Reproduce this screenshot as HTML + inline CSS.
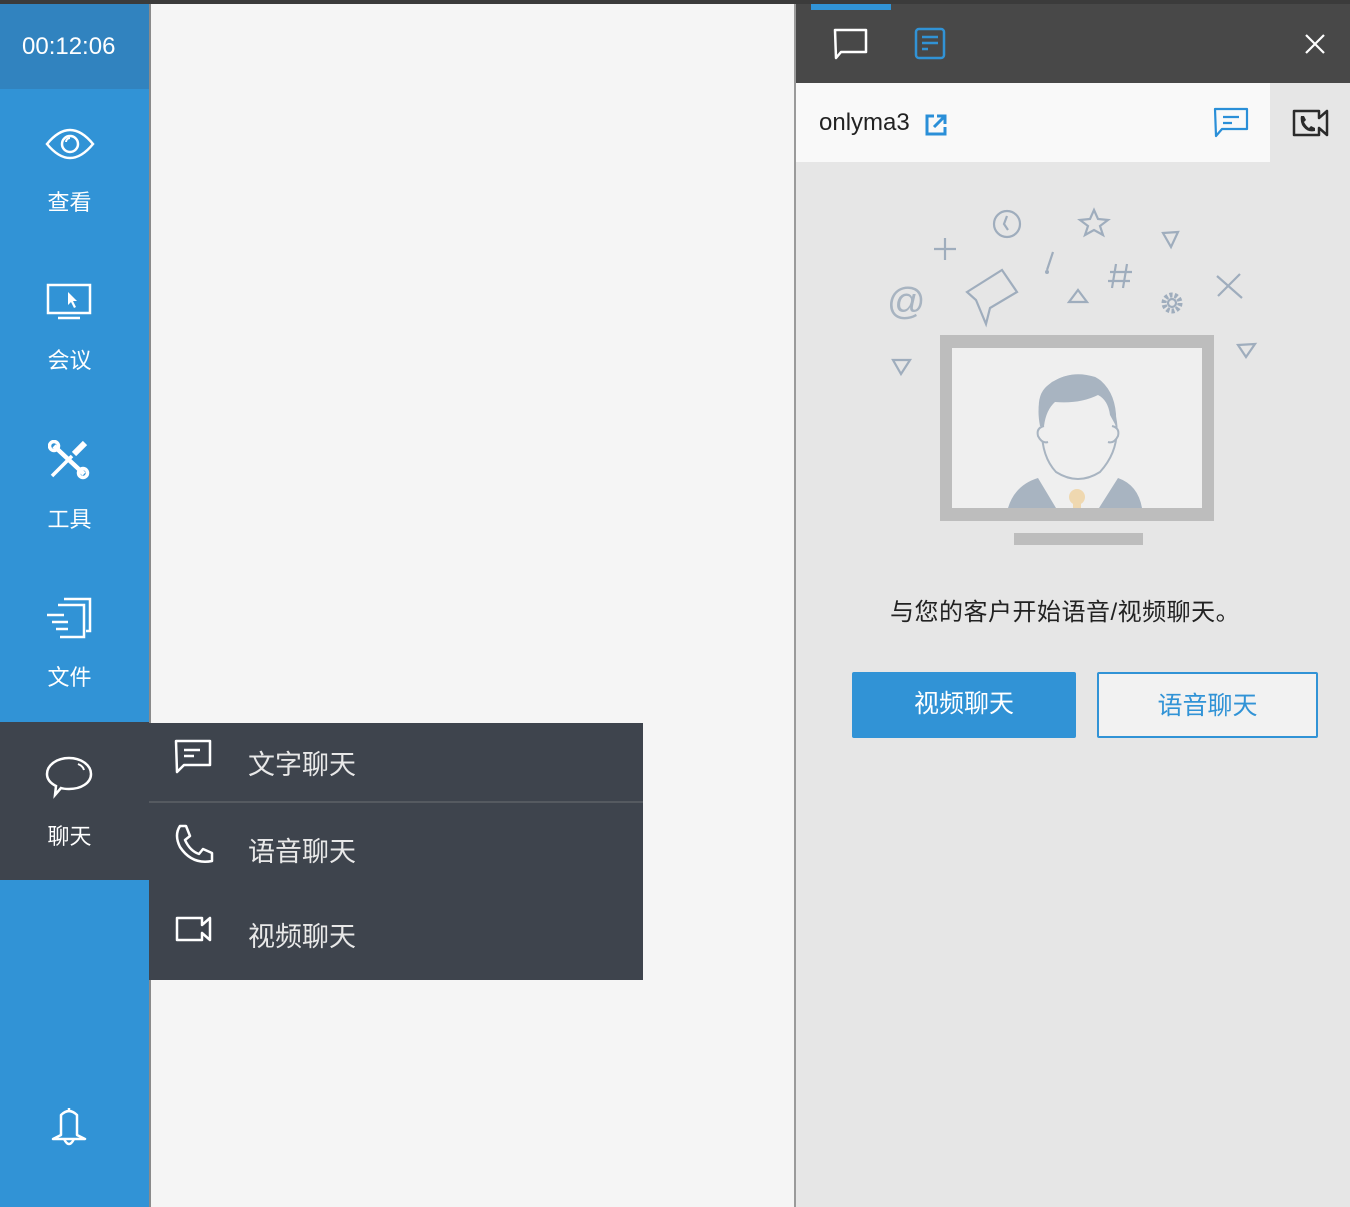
<!DOCTYPE html>
<html><head><meta charset="utf-8">
<style>
*{margin:0;padding:0;box-sizing:border-box}
body{width:1350px;height:1207px;position:relative;overflow:hidden;background:#f5f5f5;font-family:"Liberation Sans","Noto Sans CJK SC",sans-serif}
.abs{position:absolute}
.topline{left:0;top:0;width:1350px;height:4px;background:#3b3b3b}
.side{left:0;top:4px;width:149px;height:1203px;background:#3193d6}
.sideb{left:149px;top:4px;width:2px;height:1203px;background:#8a8a8a}
.timer{left:0;top:4px;width:149px;height:85px;background:#3183bf;color:#fff;font-size:24px;padding-left:22px;line-height:85px}
.lbl{color:#fff;font-size:22px;width:139px;text-align:center;left:0}
.chatitem{left:0;top:722px;width:149px;height:158px;background:#3e444d}
.menu{left:149px;top:723px;width:494px;height:257px;background:#3e444d}
.sep{left:149px;top:801px;width:494px;height:2px;background:#555a60}
.mtxt{color:#e8e8e8;font-size:27px;left:248px}
.rp{left:796px;top:4px;width:554px;height:1203px;background:#e6e6e6}
.vline{left:794px;top:4px;width:2px;height:1203px;background:#9a9a9a}
.rhead{left:796px;top:4px;width:554px;height:79px;background:#484848}
.tabline{left:811px;top:4px;width:80px;height:6px;background:#3193d6}
.wrow{left:796px;top:83px;width:474px;height:79px;background:#f9f9f9}
.btn{top:672px;height:66px;font-size:25px;text-align:center;line-height:64px;border-radius:2px}
</style></head><body>
<div class="abs topline"></div>
<div class="abs side"></div>
<div class="abs sideb"></div>
<div class="abs timer">00:12:06</div>

<svg class="abs" style="left:44px;top:124px" width="52" height="40" viewBox="0 0 52 40"><path d="M3 20 Q26 -8 49 20 Q26 48 3 20Z" fill="none" stroke="#fff" stroke-width="2.5"/><circle cx="26" cy="20" r="8" fill="none" stroke="#fff" stroke-width="2.5"/><path d="M22 18 a4 4 0 0 1 4 -4" stroke="#fff" stroke-width="2" fill="none"/></svg>
<div class="abs lbl" style="top:185px">查看</div>

<svg class="abs" style="left:46px;top:283px" width="46" height="38" viewBox="0 0 46 38"><rect x="2" y="2" width="42" height="28" fill="none" stroke="#fff" stroke-width="2.5"/><path d="M12 35 H34" stroke="#fff" stroke-width="2.5"/><path d="M22 9 L22 22 L25 19 L28 25 L30 24 L27 18 L31 18Z" fill="#fff"/></svg>
<div class="abs lbl" style="top:343px">会议</div>

<svg class="abs" style="left:48px;top:440px" width="42" height="40" viewBox="0 0 42 40"><path d="M6 6 L36 34" stroke="#fff" stroke-width="4.5"/><path d="M4 36 L24 16" stroke="#fff" stroke-width="3.5"/><path d="M26 14 L37 3" stroke="#fff" stroke-width="6"/><circle cx="35" cy="33" r="4.5" fill="none" stroke="#fff" stroke-width="3.5"/><circle cx="6" cy="6" r="4.5" fill="none" stroke="#fff" stroke-width="3.5"/></svg>
<div class="abs lbl" style="top:502px">工具</div>

<svg class="abs" style="left:46px;top:597px" width="48" height="42" viewBox="0 0 48 42"><path d="M18 2 H44 V34 H40" fill="none" stroke="#fff" stroke-width="2.5"/><path d="M12 8 H38 V40 H14" fill="none" stroke="#fff" stroke-width="2.5"/><path d="M1 18 H18 M6 25 H22 M10 32 H22" stroke="#fff" stroke-width="2.5"/></svg>
<div class="abs lbl" style="top:660px">文件</div>

<div class="abs chatitem"></div>
<svg class="abs" style="left:45px;top:755px" width="48" height="44" viewBox="0 0 48 44"><path d="M24 3 C36 3 46 10 46 19 C46 28 36 34 24 34 C21 34 19 34 16 33 L10 40 L11 31 C5 28 2 24 2 19 C2 10 12 3 24 3Z" fill="none" stroke="#fff" stroke-width="2.5"/><path d="M33 9 Q38 11 39 15" stroke="#fff" stroke-width="2" fill="none"/></svg>
<div class="abs lbl" style="top:819px">聊天</div>

<svg class="abs" style="left:50px;top:1105px" width="38" height="46" viewBox="0 0 38 46"><path d="M19 3 V6 M11 10 Q19 2 27 10 V30 L35 34 H3 L11 30Z M14 34 Q19 44 24 34" fill="none" stroke="#fff" stroke-width="2.5" stroke-linejoin="round"/></svg>

<div class="abs menu"></div>
<div class="abs sep"></div>
<svg class="abs" style="left:174px;top:739px" width="40" height="36" viewBox="0 0 40 36"><path d="M2 2 H36 V26 H10 L3 33Z" fill="none" stroke="#fff" stroke-width="2.5" stroke-linejoin="round"/><path d="M10 11 H26 M10 17 H20" stroke="#fff" stroke-width="2.5"/></svg>
<div class="abs mtxt" style="top:743px">文字聊天</div>
<svg class="abs" style="left:172px;top:823px" width="42" height="42" viewBox="0 0 42 42"><path d="M8 3 L14 3 L18 13 L13 17 Q18 28 27 31 L31 26 L40 30 L40 38 Q20 42 8 24 Q2 12 8 3Z" fill="none" stroke="#fff" stroke-width="2.5" stroke-linejoin="round"/></svg>
<div class="abs mtxt" style="top:830px">语音聊天</div>
<svg class="abs" style="left:175px;top:915px" width="38" height="28" viewBox="0 0 38 28"><path d="M2 3 H27 V10 L35 3 V25 L27 18 V25 H2Z" fill="none" stroke="#fff" stroke-width="2.5" stroke-linejoin="round"/></svg>
<div class="abs mtxt" style="top:915px">视频聊天</div>

<div class="abs rp"></div>
<div class="abs vline"></div>
<div class="abs rhead"></div>
<div class="abs tabline"></div>
<svg class="abs" style="left:833px;top:28px" width="36" height="32" viewBox="0 0 36 32"><path d="M2 2 H33 V24 H8 L3 30Z" fill="none" stroke="#fff" stroke-width="2.5" stroke-linejoin="round"/></svg>
<svg class="abs" style="left:914px;top:27px" width="32" height="34" viewBox="0 0 32 34"><rect x="2" y="2" width="28" height="29" rx="3" fill="none" stroke="#3193d6" stroke-width="2.5"/><path d="M8 10 H24 M8 16 H24 M8 22 H14" stroke="#3193d6" stroke-width="2.5"/></svg>
<svg class="abs" style="left:1304px;top:33px" width="22" height="22" viewBox="0 0 22 22"><path d="M2 2 L20 20 M20 2 L2 20" stroke="#fff" stroke-width="2.2"/></svg>

<div class="abs wrow"></div>
<div class="abs" style="left:819px;top:109px;font-size:24px;color:#222">onlyma3</div>
<svg class="abs" style="left:924px;top:113px" width="24" height="24" viewBox="0 0 24 24"><path d="M10 3 H3 V21 H21 V14" fill="none" stroke="#2a8fd8" stroke-width="3"/><path d="M10 14 L20 4 M13 3 H21 V11" fill="none" stroke="#2a8fd8" stroke-width="3"/></svg>
<svg class="abs" style="left:1213px;top:107px" width="36" height="32" viewBox="0 0 36 32"><path d="M2 2 H34 V22 H9 L3 29Z" fill="none" stroke="#2a8fd8" stroke-width="2.2" stroke-linejoin="round"/><path d="M10 10 H26 M10 16 H19" stroke="#2a8fd8" stroke-width="2.2"/></svg>
<svg class="abs" style="left:1292px;top:109px" width="38" height="28" viewBox="0 0 38 28"><path d="M2 2 H27 V9 L35 2 V26 L27 19 V26 H2Z" fill="none" stroke="#2b2b2b" stroke-width="2.5" stroke-linejoin="round"/><path d="M9 7 L12 7 L14 11 L12 13 Q14 17 17 19 L19 17 L23 19 L23 22 Q15 24 10 16 Q8 11 9 7Z" fill="#2b2b2b"/></svg>

<svg class="abs" style="left:860px;top:190px" width="420" height="370" viewBox="0 0 420 370">
<g fill="none" stroke="#9fadbd" stroke-width="2.2">
<path d="M85 48 V70 M74 59 H96"/>
<circle cx="147" cy="34" r="13"/><path d="M147 26 L144 34 L148 40"/>
<path d="M234 20 L238 29 L248 30 L240 36 L243 45 L234 40 L225 45 L228 36 L220 30 L230 29Z"/>
<path d="M303 43 L318 42 L311 57Z"/>
<path d="M107 102 L142 80 L157 102 L130 118 L126 134 L116 110Z"/>
<path d="M193 62 L187 80"/>
<path d="M218 100 L227 112 L209 112Z"/>
<path d="M256 74 L252 98 M267 74 L263 98 M250 82 H272 M248 91 H270"/>
<circle cx="312" cy="113" r="8" stroke-width="5" stroke-dasharray="3 2"/><circle cx="312" cy="113" r="4"/>
<path d="M357 86 L382 108 M358 106 L380 84"/>
<path d="M378 155 L395 154 L386 167Z"/>
<path d="M33 170 L50 170 L41 184Z"/>
</g>
<text x="27" y="124" font-family="Liberation Sans" font-size="38" fill="#a8b4c1">@</text>
<circle cx="187" cy="82" r="2" fill="#9fadbd"/>
<rect x="80" y="145" width="274" height="186" fill="#bdbdbd"/>
<rect x="92" y="158" width="250" height="160" fill="#efefef"/>
<rect x="154" y="343" width="129" height="12" fill="#bdbdbd"/>
<path d="M148 318 Q155 295 178 288 L196 318Z M282 318 Q278 295 258 288 L239 318Z" fill="#a8b4c1"/>
<circle cx="217" cy="307" r="8" fill="#efd8b0"/><rect x="213" y="310" width="8" height="8" fill="#efd8b0"/>
<path d="M182 232 Q175 205 190 195 Q210 180 235 188 Q250 195 256 232 Q260 260 240 282 Q218 296 196 282 Q180 265 182 232Z" fill="#efefef" stroke="#a8b4c1" stroke-width="2"/>
<path d="M180 236 Q174 205 192 192 Q215 178 240 190 Q258 205 256 236 L250 225 Q248 210 238 205 Q220 214 195 212 Q186 220 184 236Z" fill="#a8b4c1"/>
<path d="M184 236 Q176 238 178 246 Q182 254 188 252 M252 236 Q260 238 258 246 Q254 254 248 252" fill="#efefef" stroke="#a8b4c1" stroke-width="2"/>
</svg>

<div class="abs" style="left:890px;top:592px;font-size:24px;letter-spacing:0.5px;color:#222">与您的客户开始语音/视频聊天。</div>
<div class="abs btn" style="left:852px;width:224px;background:#3193d6;color:#fff">视频聊天</div>
<div class="abs btn" style="left:1097px;width:221px;background:#f2f2f2;border:2px solid #3193d6;color:#3193d6">语音聊天</div>
</body></html>
